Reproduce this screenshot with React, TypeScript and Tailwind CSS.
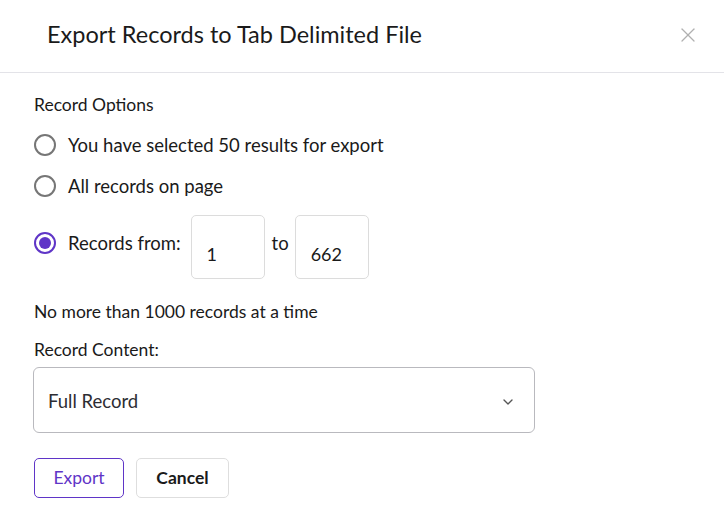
import { ChevronDown, X } from 'lucide-react';

const font = { fontFamily: 'Lato, "Noto Sans", sans-serif' };

function Radio({ checked }: { checked?: boolean }) {
  return (
    <span
      className={`flex h-[22px] w-[22px] shrink-0 items-center justify-center rounded-full border-2 ${
        checked ? 'border-[#5f35c7]' : 'border-[#767676]'
      }`}
    >
      {checked && <span className="h-[12px] w-[12px] rounded-full bg-[#5f35c7]" />}
    </span>
  );
}

export default function App() {
  return (
    <div className="h-[532px] w-[724px] bg-white text-[#1a1a1a]" style={font}>
      <header className="flex h-[73px] items-center justify-between border-b border-[#e3e3e8] pb-[3px] pl-[47px] pr-[24px]">
        <h1 className="text-[23.5px] leading-none">Export Records to Tab Delimited File</h1>
        <X className="h-[24px] w-[24px] text-[#b0b0b0]" strokeWidth={1.3} />
      </header>

      <div className="px-[34px]">
        <p className="mt-[22px] text-[17.5px] leading-5">Record Options</p>

        <label className="mt-[19px] flex items-center gap-[12px]">
          <Radio />
          <span className="text-[18.5px] leading-5">You have selected 50 results for export</span>
        </label>
        <label className="mt-[19px] flex items-center gap-[12px]">
          <Radio />
          <span className="text-[18.5px] leading-5">All records on page</span>
        </label>

        <div className="mt-[18px] flex items-center">
          <span className="mb-[8px]">
            <Radio checked />
          </span>
          <span className="mb-[8px] ml-[12px] text-[18.5px] leading-5">Records from:</span>
          <div className="ml-[10px] flex h-[64px] w-[74px] items-end rounded-[5px] border border-[#dcdcdc] px-[15px] pb-[10px] text-[18px]">
            1
          </div>
          <span className="mb-[8px] ml-[7px] mr-[6px] text-[18.5px] leading-5">to</span>
          <div className="flex h-[64px] w-[74px] items-end rounded-[5px] border border-[#dcdcdc] px-[15px] pb-[10px] text-[18px]">
            662
          </div>
        </div>

        <p className="mt-[23px] text-[17.5px] leading-5">No more than 1000 records at a time</p>
        <p className="mt-[18px] text-[17.5px] leading-5">Record Content:</p>

        <div className="-ml-px mt-[7px] flex h-[66px] w-[502px] items-center justify-between rounded-[6px] border border-[#b9b9be] pl-[14px] pr-[18px] pt-[3px]">
          <span className="text-[18.5px] text-[#2d2d33]">Full Record</span>
          <ChevronDown className="h-[16px] w-[16px] text-[#555]" strokeWidth={2} />
        </div>

        <div className="mt-[25px] flex gap-[12px]">
          <button className="h-[40px] w-[90px] rounded-[5px] border border-[#5f35c7] text-[17.5px] text-[#5f35c7]">
            Export
          </button>
          <button className="h-[40px] w-[93px] rounded-[5px] border border-[#dedede] text-[17.5px] font-bold">
            Cancel
          </button>
        </div>
      </div>
    </div>
  );
}
